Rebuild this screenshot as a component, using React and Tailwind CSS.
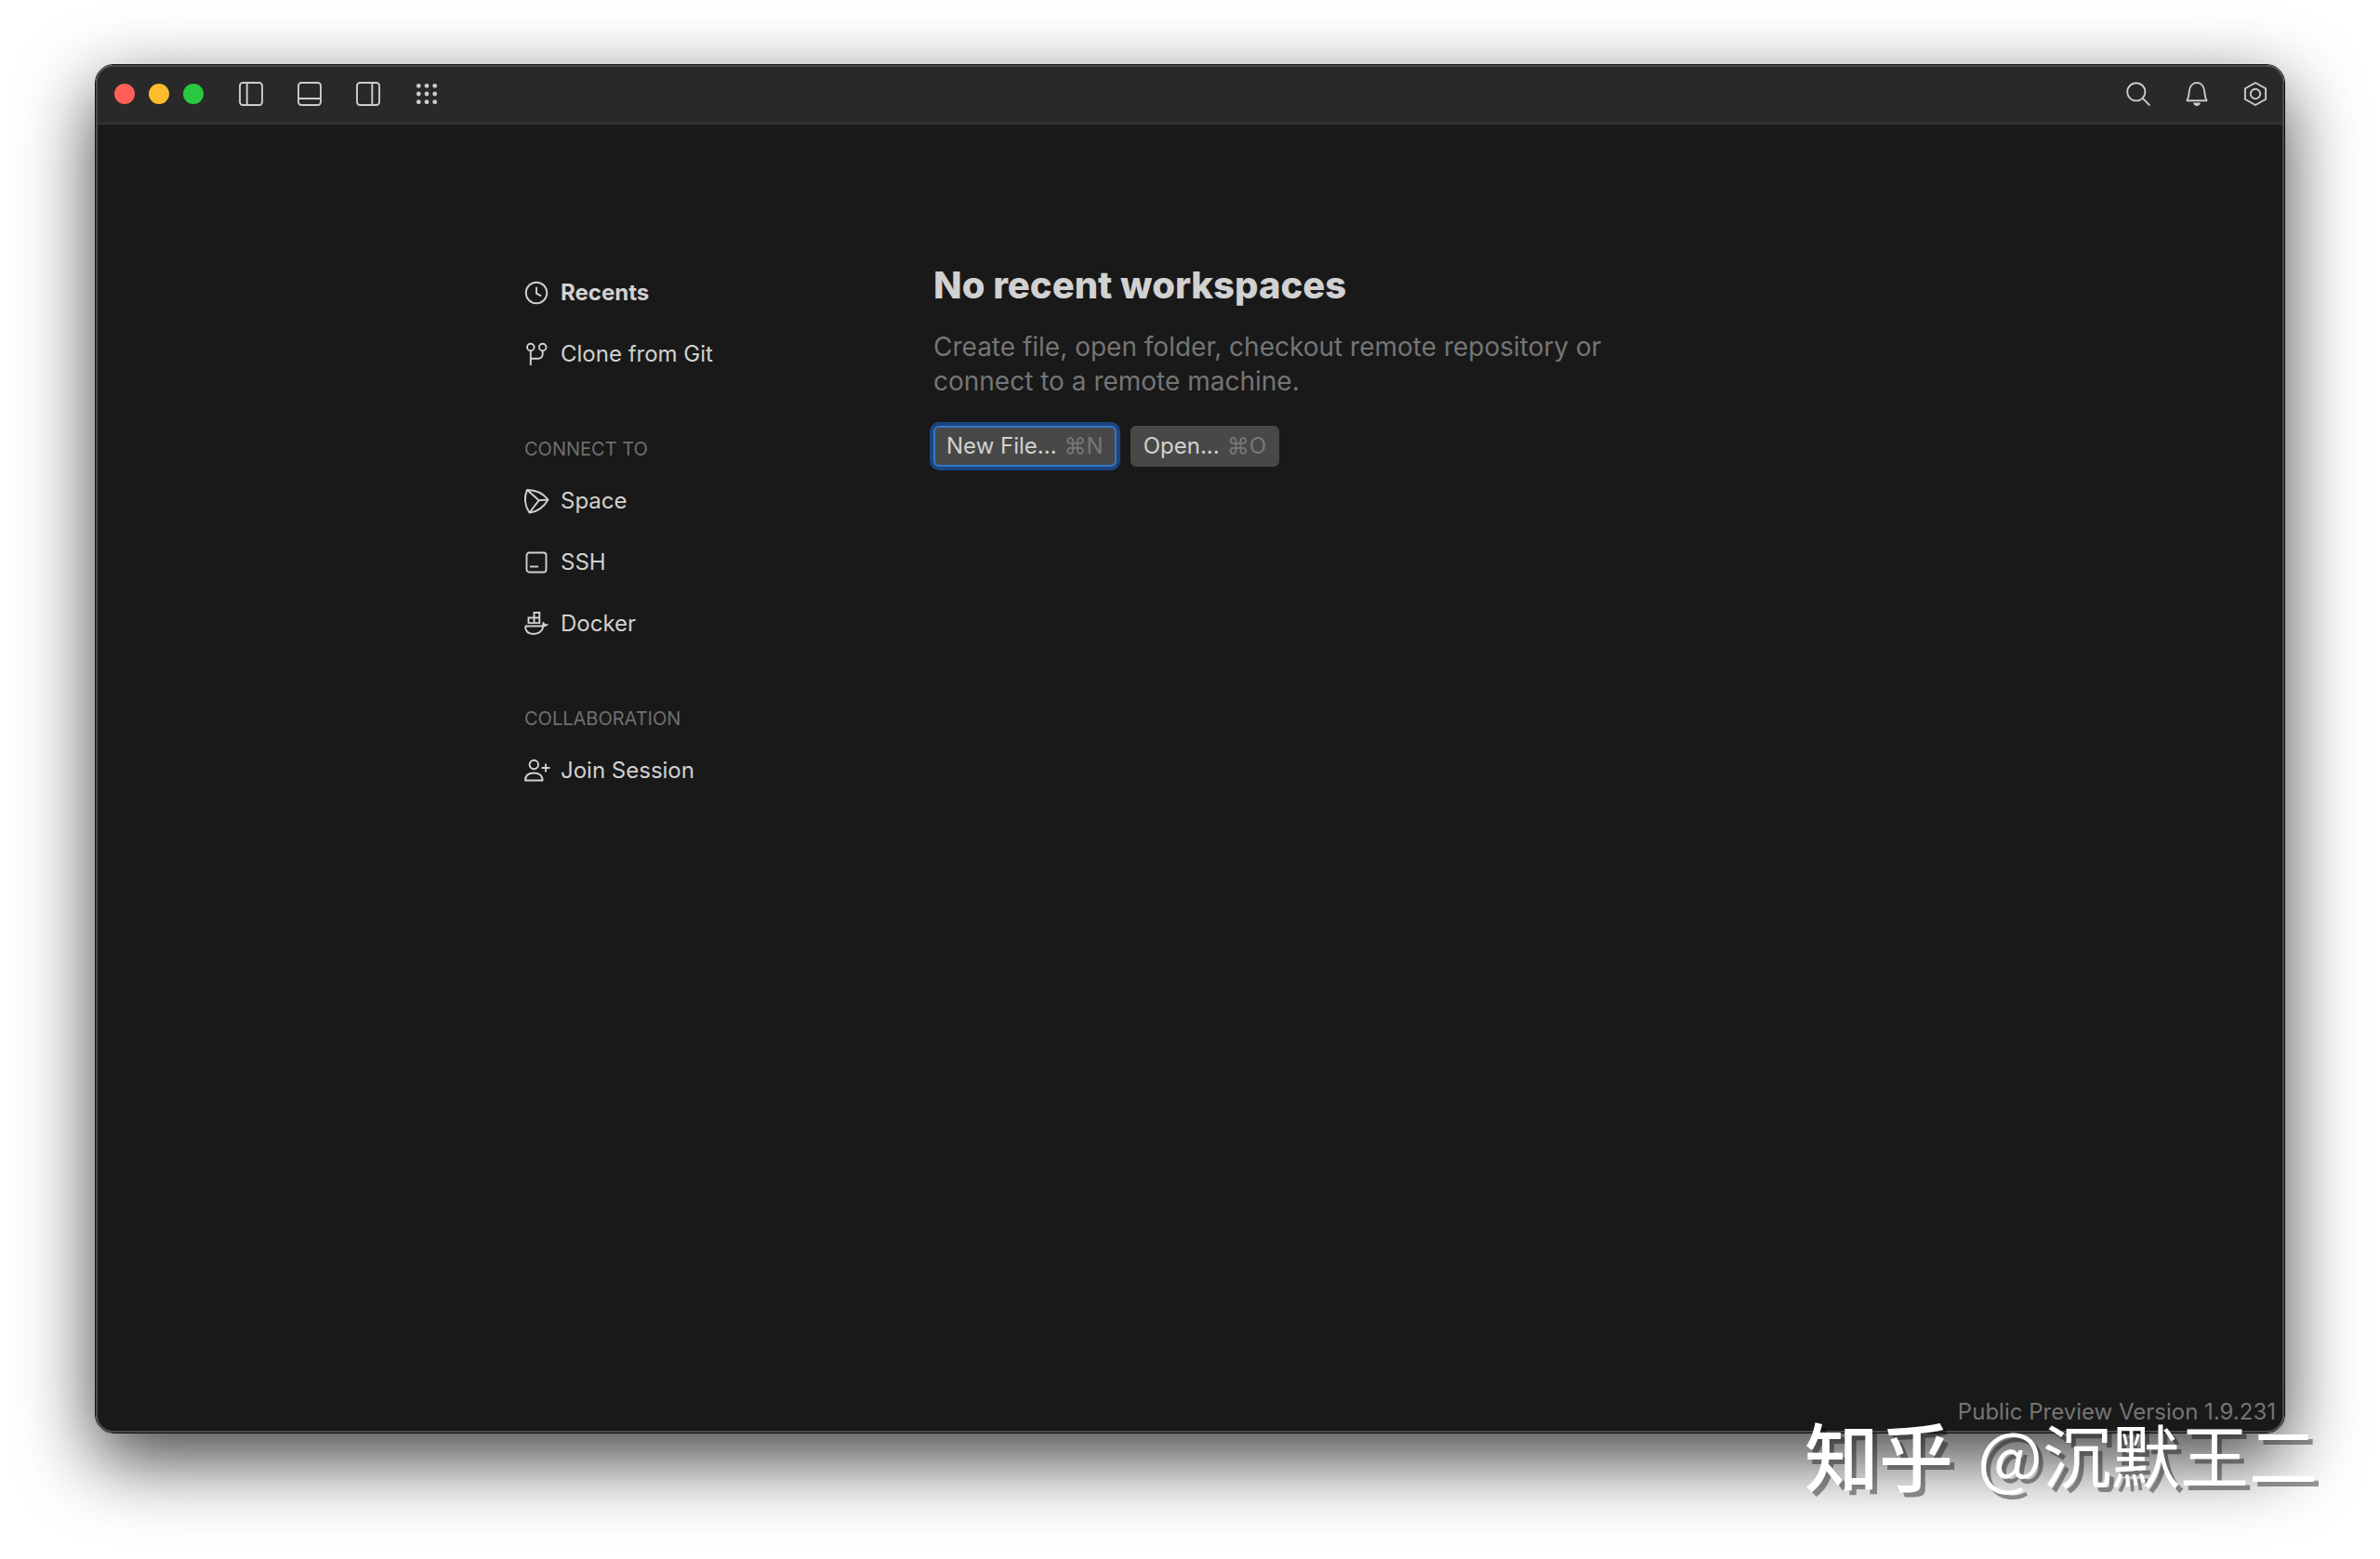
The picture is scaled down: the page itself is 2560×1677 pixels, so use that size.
import React from "react";

function Icon({ children }) {
    return (
        <svg
            viewBox="0 0 26 26"
            className="size-[26px] shrink-0 overflow-visible"
            fill="none"
            stroke="currentColor"
            strokeWidth="1.9"
            aria-hidden="true"
        >
            {children}
        </svg>
    );
}

const leftTools = [
    {
        label: "Left panel",
        icon: (
            <>
                <rect x="1" y="1" width="24" height="24" rx="3.2" />
                <path d="M8.7 1v24" />
            </>
        ),
    },
    {
        label: "Bottom panel",
        icon: (
            <>
                <rect x="1" y="1" width="24" height="24" rx="3.2" />
                <path d="M1 18h24" />
            </>
        ),
    },
    {
        label: "Right panel",
        icon: (
            <>
                <rect x="1" y="1" width="24" height="24" rx="3.2" />
                <path d="M17.3 1v24" />
            </>
        ),
    },
    {
        label: "Tools",
        icon: (
            <g fill="currentColor" stroke="none">
                {[4.3, 13, 21.7].map((y) =>
                    [4.3, 13, 21.7].map((x) => <circle key={`${x}-${y}`} cx={x} cy={y} r="2.4" />)
                )}
            </g>
        ),
    },
];

const rightTools = [
    {
        label: "Search",
        icon: (
            <>
                <circle cx="10.8" cy="10.8" r="9.6" />
                <path d="M17.8 17.8l7.6 7.6" />
            </>
        ),
    },
    {
        label: "Notifications",
        icon: (
            <>
                <path d="M2.5 20.2c1.6-3.2 2-5.6 2.3-9.7C5.2 4.6 8.5 1 13 1s7.8 3.6 8.2 9.5c.3 4.1.7 6.5 2.3 9.7z" strokeLinejoin="round" />
                <path d="M9 22.5h8c-.5 2.2-2 3.5-4 3.5s-3.5-1.3-4-3.5z" fill="currentColor" stroke="none" />
            </>
        ),
    },
    {
        label: "Settings",
        icon: (
            <>
                <path d="M13 1l11.1 6.2v11.6L13 25 1.9 18.8V7.2z" />
                <circle cx="13" cy="13" r="5.2" />
            </>
        ),
    },
];

const groups = [
    {
        items: [
            {
                label: "Recents",
                active: true,
                icon: (
                    <>
                        <circle cx="13" cy="13" r="11.3" />
                        <path d="M13 6.8v6.8l5 2.7" />
                    </>
                ),
            },
            {
                label: "Clone from Git",
                icon: (
                    <>
                        <circle cx="6.8" cy="5.5" r="3.8" />
                        <circle cx="19.7" cy="5.5" r="3.8" />
                        <path d="M6.8 9.3V25M6.8 17.8h7.7c3.4 0 5.2-1.8 5.2-5.2V9.3" />
                    </>
                ),
            },
        ],
    },
    {
        title: "CONNECT TO",
        items: [
            {
                label: "Space",
                icon: (
                    <g strokeLinejoin="round">
                        <path d="M3 1c8.5 0 17 3.5 22.5 10.5C21.5 18.5 14.5 24.5 5.5 25.5.5 18-.5 9 3 1z" />
                        <path d="M3 1l12.7 11.2L5.5 25.5M15.7 12.2l9.8-.7" />
                    </g>
                ),
            },
            {
                label: "SSH",
                icon: (
                    <>
                        <rect x="2.5" y="2.5" width="21" height="21" rx="2.8" />
                        <path d="M6 17.5h9" />
                    </>
                ),
            },
            {
                label: "Docker",
                icon: (
                    <>
                        <path d="M1 15.5h17.8c1.3-.2 1.7-1.2 1.7-3.5M1 15.5c.2 5.5 3 8.5 8.8 8.5 5.7 0 9.3-3 10.9-8.5" />
                        <path d="M19.6 10.5c1.5.6 2.2 1.6 2.4 2.7h4c-.7 1.8-2.5 2.9-5.4 2.9z" fill="currentColor" stroke="none" />
                        <path d="M4.5 12.1V6.5h6V1h5.8v11.1zM10.5 6.5v5.6M10.5 6.5h5.8" />
                    </>
                ),
            },
        ],
    },
    {
        title: "COLLABORATION",
        items: [
            {
                label: "Join Session",
                icon: (
                    <>
                        <circle cx="10.3" cy="6.5" r="4.7" />
                        <path d="M1 23.5c0-5.5 3.8-8 9.3-8s9.3 2.5 9.3 8z" strokeLinejoin="round" />
                        <path d="M23 5.5v9M18.500 10h9" />
                    </>
                ),
            },
        ],
    },
];

function Toolbar({ tools }) {
    return (
        <div className="flex gap-[31px]">
            {tools.map((tool) => (
                <button key={tool.label} type="button" aria-label={tool.label} className="flex size-8 items-center justify-center">
                    <Icon>{tool.icon}</Icon>
                </button>
            ))}
        </div>
    );
}

function TitleBar() {
    return (
        <header className="flex h-[62px] items-center justify-between border-b-2 border-[#353535] bg-[#292929] pr-[13px] pb-0.5 pl-[18px] text-[#cdcdcd]">
            <div className="flex items-center gap-[35px]">
                <div className="flex gap-[15px]">
                    <button type="button" aria-label="Close" className="size-[22px] rounded-full bg-[#ff5f57]" />
                    <button type="button" aria-label="Minimize" className="size-[22px] rounded-full bg-[#febc2e]" />
                    <button type="button" aria-label="Zoom" className="size-[22px] rounded-full bg-[#28c840]" />
                </div>
                <Toolbar tools={leftTools} />
            </div>
            <Toolbar tools={rightTools} />
        </header>
    );
}

function Sidebar() {
    return (
        <nav className="w-[440px] shrink-0 pt-px text-2xl">
            {groups.map((group, i) => (
                <section key={i}>
                    {group.title && (
                        <h2 className="mt-12 h-11 text-xl leading-[42px] text-[#6f6f6f]">{group.title}</h2>
                    )}
                    <ul>
                        {group.items.map((item) => (
                            <li key={item.label}>
                                <button
                                    type="button"
                                    className={`flex h-[66px] items-center gap-[13px] ${item.active ? "font-bold" : ""}`}
                                >
                                    <Icon>{item.icon}</Icon>
                                    {item.label}
                                </button>
                            </li>
                        ))}
                    </ul>
                </section>
            ))}
        </nav>
    );
}

function Welcome() {
    return (
        <main className="min-w-0 flex-1">
            <h1 className="text-[40px] leading-[52px] font-extrabold">No recent workspaces</h1>
            <p className="mt-[22px] max-w-[740px] text-[28px] leading-[37px] text-[#757575]">
                Create file, open folder, checkout remote repository or connect to a remote machine.
            </p>
            <div className="mt-[29px] flex gap-[15px] text-2xl">
                <button
                    type="button"
                    className="flex h-11 items-center gap-2 rounded-md bg-[#484848] px-[14px] ring-4 ring-[#1c4580] outline-2 -outline-offset-2 outline-[#3478c6]"
                >
                    New File... <span className="text-[#777777]">⌘N</span>
                </button>
                <button type="button" className="flex h-11 items-center gap-2 rounded-md bg-[#484848] px-[14px]">
                    Open... <span className="text-[#777777]">⌘O</span>
                </button>
            </div>
        </main>
    );
}

export default function App() {
    return (
        <div className="relative flex min-h-screen flex-col bg-white px-[102px] pt-[69px] pb-[135px] font-['Inter',sans-serif] text-[#d1d1d1]">
            <div className="flex flex-1 flex-col rounded-[20px] border border-[#111111] shadow-[0_28px_80px_rgba(0,0,0,0.74)]">
                <div className="flex flex-1 flex-col overflow-hidden rounded-[19px] border-2 border-[#4a4a4a] bg-[#191919]">
                    <TitleBar />
                    <div className="mx-auto flex w-full max-w-[1432px] flex-1 pt-[147px]">
                        <Sidebar />
                        <Welcome />
                    </div>
                    <footer className="pr-[7px] pb-2 text-right text-2xl leading-6 text-[#757575]">
                        Public Preview Version 1.9.231
                    </footer>
                </div>
            </div>
            <div className="absolute right-[67px] bottom-[77px] flex items-center gap-[26px] font-['Noto_Sans_CJK_SC',sans-serif] text-[74px] leading-[74px] whitespace-nowrap text-white [text-shadow:5px_5px_0_rgba(0,0,0,0.4)]">
                <span className="text-[80px] font-medium">知乎</span>
                <span>@沉默王二</span>
            </div>
        </div>
    );
}
